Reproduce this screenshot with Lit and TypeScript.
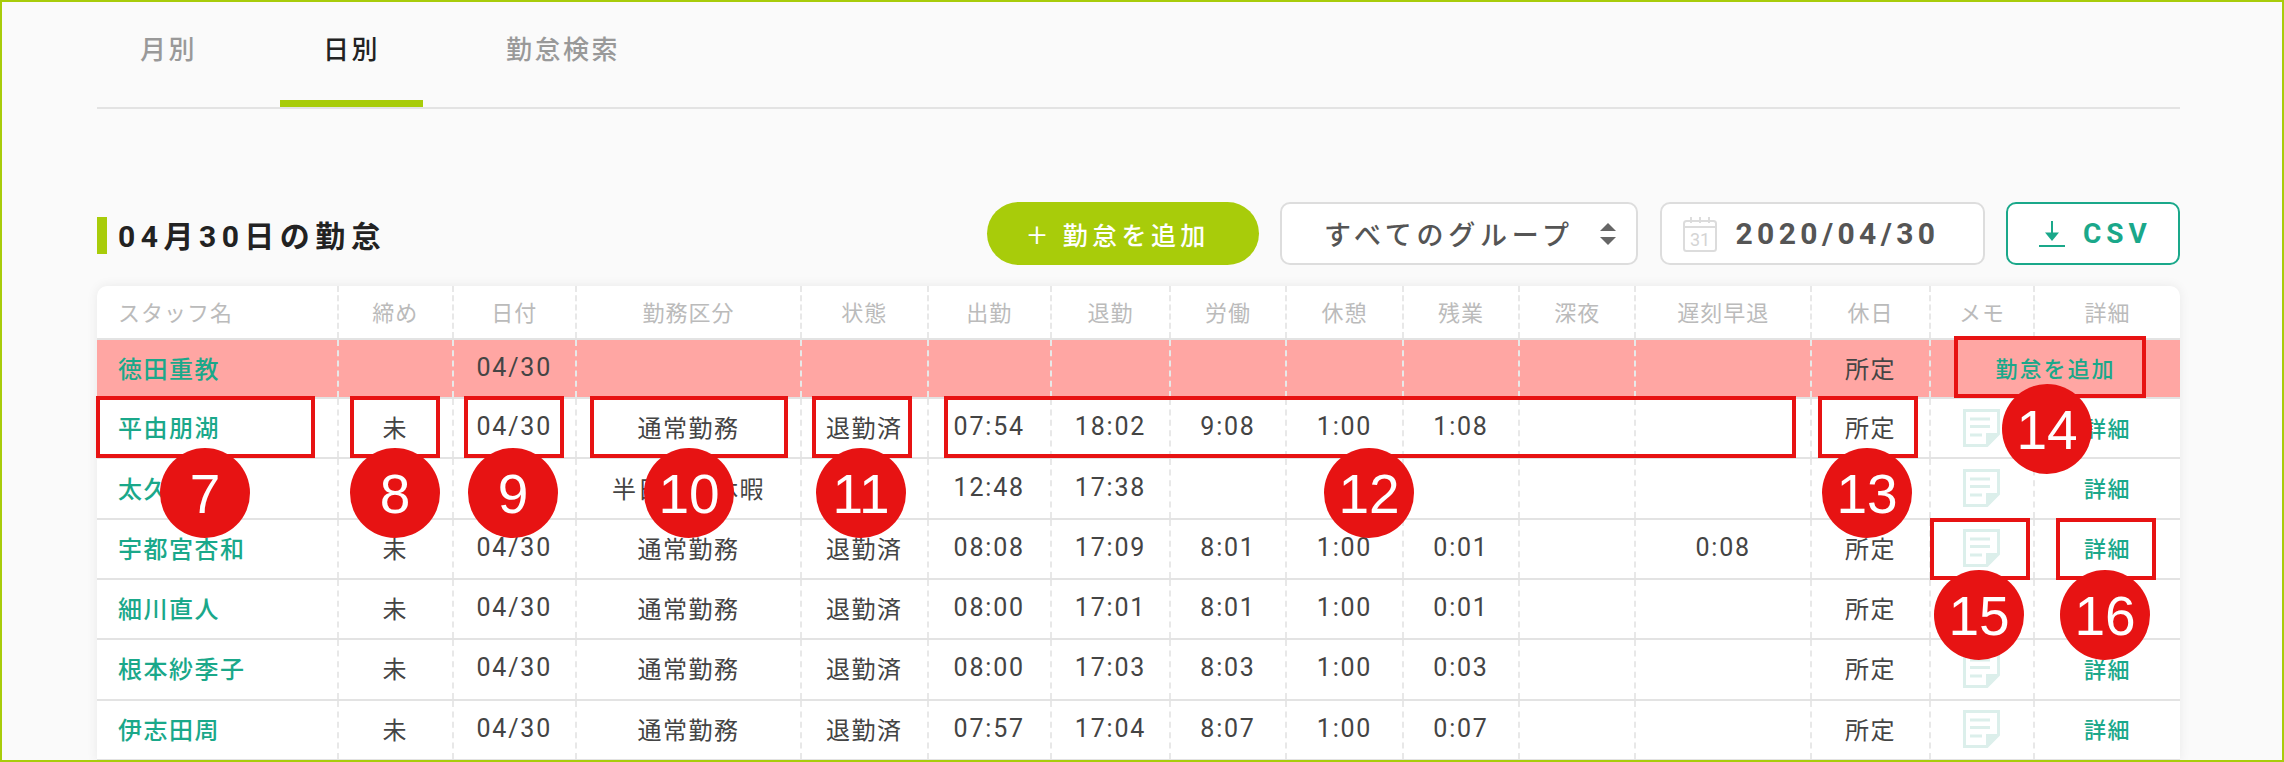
import { LitElement, html, css, svg } from 'lit';
import { customElement } from 'lit/decorators.js';

const HEAD = ['スタッフ名', '締め', '日付', '勤務区分', '状態', '出勤', '退勤', '労働', '休憩', '残業', '深夜', '遅刻早退', '休日', 'メモ', '詳細'];

const ROWS = [
  ['平由朋湖', '未', '04/30', '通常勤務', '退勤済', '07:54', '18:02', '9:08', '1:00', '1:08', '', '', '所定'],
  ['太久保和美', '未', '04/30', '半日有給休暇', '退勤済', '12:48', '17:38', '', '', '', '', '', '所定'],
  ['宇都宮杏和', '未', '04/30', '通常勤務', '退勤済', '08:08', '17:09', '8:01', '1:00', '0:01', '', '0:08', '所定'],
  ['細川直人', '未', '04/30', '通常勤務', '退勤済', '08:00', '17:01', '8:01', '1:00', '0:01', '', '', '所定'],
  ['根本紗季子', '未', '04/30', '通常勤務', '退勤済', '08:00', '17:03', '8:03', '1:00', '0:03', '', '', '所定'],
  ['伊志田周', '未', '04/30', '通常勤務', '退勤済', '07:57', '17:04', '8:07', '1:00', '0:07', '', '', '所定'],
];

// callout boxes: x, y, w, h in page pixels
const BOXES = [
  [96, 396, 219, 62],
  [350, 396, 90, 62],
  [464, 396, 100, 62],
  [590, 396, 198, 62],
  [812, 396, 100, 62],
  [944, 396, 852, 62],
  [1818, 396, 100, 62],
  [1954, 336, 192, 62],
  [1930, 518, 100, 62],
  [2056, 518, 100, 62],
];

// numbered pins: label, centre x, centre y
const PINS: [number, number, number][] = [
  [7, 205, 493],
  [8, 395, 493],
  [9, 513, 493],
  [10, 689, 493],
  [11, 861, 493],
  [12, 1369, 493],
  [13, 1867, 493],
  [14, 2047, 429],
  [15, 1979, 615],
  [16, 2105, 615],
];

const memoIcon = svg`
  <svg class="memo" width="37" height="38" viewBox="0 0 37 38" fill="none" stroke="#dcefeb" stroke-width="3">
    <path d="M1.5 1.5H35.5V25L24 36.5H1.5Z" />
    <path d="M24 36.5V25H35.5" fill="#dcefeb" stroke-width="2" />
    <path d="M7 10H27M7 17.5H27M7 26H19" />
  </svg>`;

const isNum = (v: string) => /^[\d:/]+$/.test(v);

@customElement('app-root')
export class AppRoot extends LitElement {
  private cell(v: string) {
    return html`<div class="cell ${isNum(v) ? 'num' : ''}">${v}</div>`;
  }

  private renderRow(row: string[]) {
    return html`
      <div class="row">
        <div class="cell name">${row[0]}</div>
        ${row.slice(1).map(v => this.cell(v))}
        <div class="cell">${memoIcon}</div>
        <div class="cell link">詳細</div>
      </div>
    `;
  }

  override render() {
    return html`
      <nav class="tabs">
        <div class="tab">月別</div>
        <div class="tab active">日別</div>
        <div class="tab">勤怠検索</div>
      </nav>

      <div class="toolbar">
        <h2 class="title">04月30日の勤怠</h2>
        <button class="add"><span class="plus">+</span>勤怠を追加</button>
        <div class="field select">
          <span>すべてのグループ</span>
          <span class="arrows"><i class="up"></i><i class="down"></i></span>
        </div>
        <div class="field date">
          <svg width="34" height="36" viewBox="0 0 34 36" fill="none" stroke="#dcdcdc" stroke-width="2">
            <rect x="1" y="5" width="32" height="30" rx="2.5" />
            <path d="M1 11H33M8 1V7M17 1V7M26 1V7" />
            <text x="17" y="30" text-anchor="middle" class="cal-num">31</text>
          </svg>
          <span>2020/04/30</span>
        </div>
        <button class="csv">
          <svg width="28" height="27" viewBox="0 0 28 27" fill="none" stroke="#1aa88a" stroke-width="2">
            <path d="M14 1V14" />
            <path d="M7 12.5H21L14 21Z" fill="#1aa88a" stroke="none" />
            <path d="M1 26H27" />
          </svg>
          CSV
        </button>
      </div>

      <div class="table">
        <div class="row head">${HEAD.map(h => html`<div class="cell ${h === 'スタッフ名' ? 'name' : ''}">${h}</div>`)}</div>
        <div class="row alert">
          <div class="cell name">徳田重教</div>
          ${['', '04/30', '', '', '', '', '', '', '', '', '', '所定'].map(v => this.cell(v))}
          <div class="cell link wide">勤怠を追加</div>
        </div>
        ${ROWS.map(r => this.renderRow(r))}
      </div>

      <div class="overlay">
        ${BOXES.map(([x, y, w, h]) => html`<div class="box" style="left:${x}px;top:${y}px;width:${w}px;height:${h}px"></div>`)}
        ${PINS.map(([n, x, y]) => html`<div class="pin" style="left:${x - 45}px;top:${y - 45}px">${n}</div>`)}
      </div>
    `;
  }

  static override styles = css`
    :host {
      display: block;
      position: relative;
      box-sizing: border-box;
      width: 2284px;
      height: 762px;
      overflow: hidden;
      border: 2px solid #a8cc0a;
      padding: 0 102px 0 95px;
      background: #fafafa;
      color: #444;
      font-family: Roboto, 'Noto Sans CJK JP', sans-serif;
    }

    /* --- Tabs --- */

    .tabs {
      display: flex;
      gap: 40px;
      height: 105px;
      border-bottom: 2px solid #e3e3e3;
    }

    .tab {
      box-sizing: border-box;
      height: 105px;
      padding: 27px 43px 0;
      line-height: 42px;
      font-size: 26px;
      font-weight: 500;
      letter-spacing: 2.5px;
      color: #999;
    }

    .tab.active {
      color: #222;
      border-bottom: 7px solid #a8cc0a;
    }

    /* --- Toolbar --- */

    .toolbar {
      display: flex;
      align-items: center;
      gap: 21.5px;
      height: 63px;
      margin: 93px 0 21px;
    }

    .title {
      flex: 1;
      margin: 4px 0 0;
      height: 37px;
      padding-left: 11px;
      border-left: 10px solid #a8cc0a;
      box-sizing: border-box;
      line-height: 40px;
      font-size: 30px;
      font-weight: 700;
      letter-spacing: 5.5px;
      color: #222;
      white-space: nowrap;
    }

    button {
      font: inherit;
      box-sizing: border-box;
      height: 63px;
      padding: 0;
      cursor: pointer;
    }

    .add {
      display: flex;
      align-items: center;
      width: 272px;
      padding-left: 41px;
      border: none;
      border-radius: 32px;
      background: #a8cc0a;
      color: #fff;
      font-size: 25px;
      font-weight: 500;
      letter-spacing: 4.4px;
    }

    .plus {
      margin-right: 16px;
      font-weight: 300;
      font-size: 34px;
      line-height: 1;
      letter-spacing: 0;
    }

    .field {
      display: flex;
      align-items: center;
      box-sizing: border-box;
      height: 63px;
      border: 2px solid #ddd;
      border-radius: 10px;
      background: #fff;
      color: #555;
      font-weight: 500;
    }

    .select {
      width: 358px;
      padding: 0 20px 0 42px;
      justify-content: space-between;
      font-size: 27px;
      letter-spacing: 4.8px;
    }

    .arrows {
      display: flex;
      flex-direction: column;
      gap: 6px;
    }

    .arrows i {
      display: block;
      border-left: 8px solid transparent;
      border-right: 8px solid transparent;
    }

    .arrows .up {
      border-bottom: 8px solid #666;
    }

    .arrows .down {
      border-top: 8px solid #666;
    }

    .date {
      width: 325px;
      padding-left: 21px;
      gap: 19px;
      font-size: 30px;
      font-weight: 700;
      letter-spacing: 4.4px;
    }

    .cal-num {
      font-size: 18px;
      fill: #d4d4d4;
      stroke: none;
      letter-spacing: 0;
      font-weight: 400;
    }

    .csv {
      display: flex;
      align-items: center;
      gap: 17px;
      width: 174px;
      padding-left: 30px;
      border: 2px solid #1aa88a;
      border-radius: 10px;
      background: #fff;
      color: #1aa88a;
      font-size: 28px;
      font-weight: 700;
      letter-spacing: 5px;
    }

    /* --- Table --- */

    .table {
      border-radius: 10px 10px 0 0;
      background: #fff;
      box-shadow: 0 0 12px rgba(0, 0, 0, 0.07);
      overflow: hidden;
    }

    .row {
      display: grid;
      grid-template-columns: 240px 114.5px 123.5px 225px 126.5px 123.5px 119px 116px 117px 116px 116.4px 175.6px 119px 104px 147px;
      box-sizing: border-box;
      height: 60.3px;
      border-bottom: 2px solid #e3e3e3;
      font-size: 24px;
      letter-spacing: 1.5px;
    }

    .row.head {
      height: 54px;
      font-size: 22px;
      letter-spacing: 1px;
      color: #bbb;
    }

    .row.alert {
      height: 59.1px;
      background: #ffa6a3;
    }

    .cell {
      display: flex;
      align-items: center;
      justify-content: center;
      box-sizing: border-box;
      padding-bottom: 3px;
      white-space: nowrap;
      border-left: 2px dashed #e8e8e8;
    }

    .cell.num {
      font-size: 25px;
      letter-spacing: 1.8px;
    }

    .cell.name {
      justify-content: flex-start;
      padding-left: 21px;
      border-left: none;
    }

    .row:not(.head) .cell.name {
      color: #1aa88a;
      font-weight: 500;
    }

    .cell.link {
      color: #1aa88a;
      font-size: 22px;
      font-weight: 500;
    }

    .cell.wide {
      grid-column: span 2;
      letter-spacing: 2px;
    }

    .memo {
      display: block;
      transform: translateY(1px);
    }

    /* --- Callouts --- */

    .overlay {
      position: absolute;
      top: -2px;
      left: -2px;
    }

    .box {
      position: absolute;
      box-sizing: border-box;
      border: 4px solid #e71313;
    }

    .pin {
      position: absolute;
      width: 90px;
      height: 90px;
      border-radius: 50%;
      background: #e71313;
      color: #fff;
      text-align: center;
      line-height: 92px;
      font-family: 'Liberation Sans', sans-serif;
      font-size: 55px;
    }
  `;
}
